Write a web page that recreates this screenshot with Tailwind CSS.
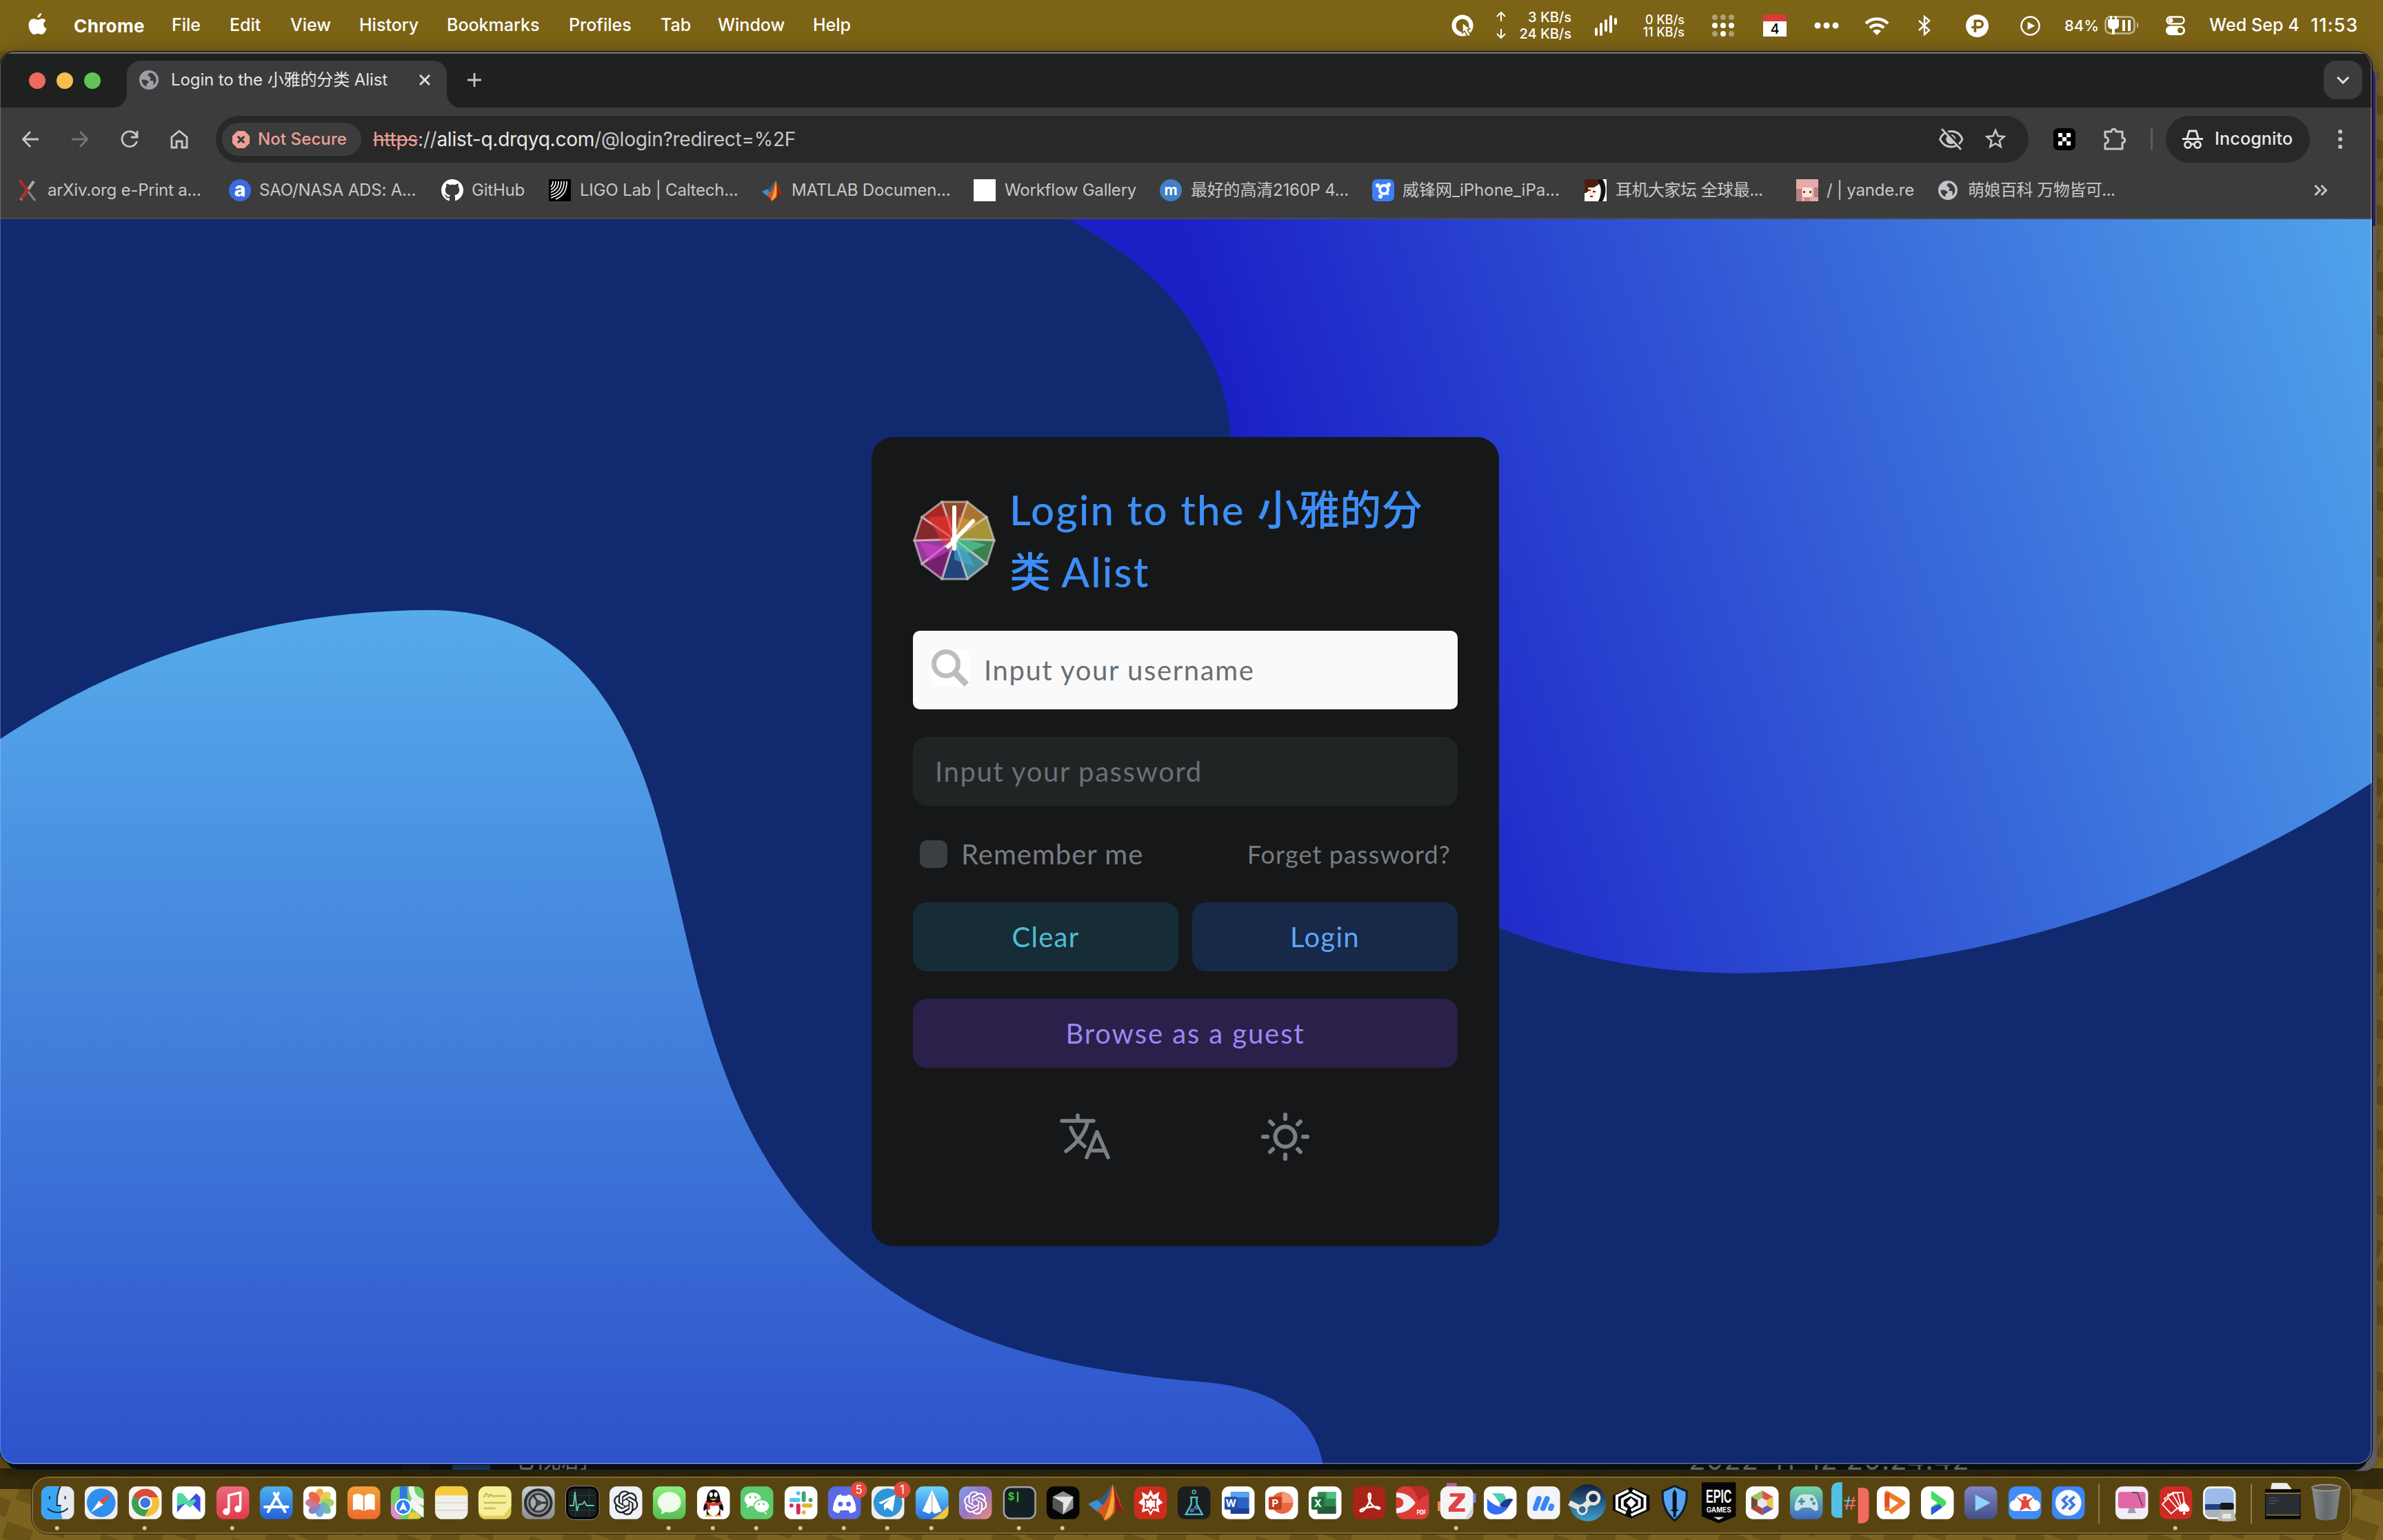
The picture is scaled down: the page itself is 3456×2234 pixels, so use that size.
<!DOCTYPE html>
<html lang="en">
<head>
<meta charset="utf-8">
<title>Login to the 小雅的分类 Alist</title>
<script src="https://cdn.jsdelivr.net/npm/@tailwindcss/browser@4"></script>
</head>
<body class="relative w-[3456px] h-[2234px] overflow-hidden bg-[#7c6419] font-['Inter','Noto_Sans_CJK_SC',sans-serif]">

<!-- shared shapes -->
<svg class="absolute size-0">
  <defs>
    <rect id="t" x="8" y="8" width="48" height="48" rx="11"/>
    <symbol id="globe" viewBox="0 0 28 28"><circle cx="14" cy="14" r="14" fill="currentColor"/><path d="M3.500 14c4-1 7 0 9 1.500s1 3-1 3.500 0 3-1 4.500C6 22 3.500 18 3.500 14zM15 3.500c-2 1.500-3 3-2 4.500s3 1 3.500 3-2 2-1 3.500 4-.5 5 1.500-1 4 0 5.500c2.500-2 4-4.500 4-7.500C24.500 8.500 20.500 4 15 3.500z" fill="#3c3c3c"/></symbol>
    <symbol id="gpt" viewBox="0 0 24 24"><path fill="currentColor" d="M22.2819 9.8211a5.9847 5.9847 0 0 0-.5157-4.9108 6.0462 6.0462 0 0 0-6.5098-2.9A6.0651 6.0651 0 0 0 4.9807 4.1818a5.9847 5.9847 0 0 0-3.9977 2.9 6.0462 6.0462 0 0 0 .7427 7.0966 5.98 5.98 0 0 0 .511 4.9107 6.051 6.051 0 0 0 6.5146 2.9001A5.9847 5.9847 0 0 0 13.2599 24a6.0557 6.0557 0 0 0 5.7718-4.2058 5.9894 5.9894 0 0 0 3.9977-2.9001 6.0557 6.0557 0 0 0-.7475-7.0729zm-9.022 12.6081a4.4755 4.4755 0 0 1-2.8764-1.0408l.1419-.0804 4.7783-2.7582a.7948.7948 0 0 0 .3927-.6813v-6.7369l2.02 1.1686a.071.071 0 0 1 .038.052v5.5826a4.504 4.504 0 0 1-4.4945 4.4944zm-9.6607-4.1254a4.4708 4.4708 0 0 1-.5346-3.0137l.142.0852 4.783 2.7582a.7712.7712 0 0 0 .7806 0l5.8428-3.3685v2.3324a.0804.0804 0 0 1-.0332.0615L9.74 19.9502a4.4992 4.4992 0 0 1-6.1408-1.6464zM2.3408 7.8956a4.485 4.485 0 0 1 2.3655-1.9728V11.6a.7664.7664 0 0 0 .3879.6765l5.8144 3.3543-2.0201 1.1685a.0757.0757 0 0 1-.071 0l-4.8303-2.7865A4.504 4.504 0 0 1 2.3408 7.872zm16.5963 3.8558L13.1038 8.364 15.1192 7.2a.0757.0757 0 0 1 .071 0l4.8303 2.7913a4.4944 4.4944 0 0 1-.6765 8.1042v-5.6772a.79.79 0 0 0-.407-.667zm2.0107-3.0231l-.142-.0852-4.7735-2.7818a.7759.7759 0 0 0-.7854 0L9.409 9.2297V6.8974a.0662.0662 0 0 1 .0284-.0615l4.8303-2.7866a4.4992 4.4992 0 0 1 6.6802 4.66zM8.3065 12.863l-2.02-1.1638a.0804.0804 0 0 1-.038-.0567V6.0742a4.4992 4.4992 0 0 1 7.3757-3.4537l-.142.0805L8.704 5.459a.7948.7948 0 0 0-.3927.6813zm1.0976-2.3654l2.602-1.4998 2.6069 1.4998v2.9994l-2.5974 1.4997-2.6067-1.4997Z"/></symbol>
    <symbol id="matlab" viewBox="0 0 60 60"><path d="M0 32l15-7 9 9-10 10z" fill="#3f8fc9"/><path d="M15 25l8-4C30 14 34 4 40 0c-3 12-8 26-16 34z" fill="#2b5d86"/><path d="M14 44l10-10C32 26 36 10 40 0c6 8 12 34 20 46-8-6-12-6-18 2-5 6-9 10-14 12-3-6-7-14-14-16z" fill="#d2561f"/><path d="M40 0c-1 20-6 40-14 58 6-2 10-6 14-12C44 30 42 12 40 0z" fill="#f5a83c"/><path d="M41 2c4 10 10 34 19 44-7-5-11-5-16 0 1-14 0-30-3-44z" fill="#8f1d12"/></symbol>
    <linearGradient id="gBlue" x1="0" y1="0" x2="0" y2="1"><stop offset="0" stop-color="#4fb3f0"/><stop offset="1" stop-color="#2460dc"/></linearGradient>
    <linearGradient id="gRed" x1="0" y1="0" x2="0" y2="1"><stop offset="0" stop-color="#ee6a7d"/><stop offset="1" stop-color="#e23a4c"/></linearGradient>
    <linearGradient id="gOrange" x1="0" y1="0" x2="0" y2="1"><stop offset="0" stop-color="#f3a03c"/><stop offset="1" stop-color="#ec6a2b"/></linearGradient>
    <linearGradient id="gGreen" x1="0" y1="0" x2="0" y2="1"><stop offset="0" stop-color="#8bee80"/><stop offset="1" stop-color="#58be52"/></linearGradient>
    <linearGradient id="gTeal" x1="0" y1="0" x2="0" y2="1"><stop offset="0" stop-color="#76d8a2"/><stop offset="1" stop-color="#3e67c4"/></linearGradient>
    <linearGradient id="gSky" x1="0" y1="0" x2="0" y2="1"><stop offset="0" stop-color="#6fd6fb"/><stop offset="1" stop-color="#2a6fe0"/></linearGradient>
    <linearGradient id="gMix" x1="0" y1="0" x2="1" y2="1"><stop offset="0" stop-color="#7fa2e8"/><stop offset=".5" stop-color="#9a72c4"/><stop offset="1" stop-color="#ee8f76"/></linearGradient>
    <linearGradient id="gSteam" x1="0" y1="0" x2="0" y2="1"><stop offset="0" stop-color="#10203f"/><stop offset="1" stop-color="#3f9fd0"/></linearGradient>
    <linearGradient id="gPlay" x1="0" y1="0" x2="0" y2="1"><stop offset="0" stop-color="#7d86c8"/><stop offset="1" stop-color="#454f86"/></linearGradient>
    <linearGradient id="gGray" x1="0" y1="0" x2="0" y2="1"><stop offset="0" stop-color="#c8d2d6"/><stop offset="1" stop-color="#8c8c8c"/></linearGradient>
    <linearGradient id="gBin" x1="0" y1="0" x2="1" y2="0"><stop offset="0" stop-color="#8d8f90"/><stop offset=".5" stop-color="#62686d"/><stop offset="1" stop-color="#858789"/></linearGradient>
    <pattern id="tiles" width="90" height="60" patternUnits="userSpaceOnUse" patternTransform="rotate(20)"><rect width="90" height="60" fill="#7c6420"/><rect width="40" height="26" fill="#6a5316"/><rect x="45" y="30" width="40" height="26" fill="#6a5316"/></pattern>
  </defs>
</svg>
<svg class="absolute inset-0" width="3456" height="2234"><rect y="74" width="3456" height="2160" fill="url(#tiles)"/><rect y="2130" width="3456" height="30" fill="#2a2108" opacity=".85"/></svg>

<!-- menu bar -->
<header class="relative flex items-center h-[74px] bg-[#7c6316] text-white text-[25px] font-medium whitespace-nowrap pl-[41px]">
  <svg class="w-[27px] h-[32px] mr-[39px] mb-[4px]" viewBox="0 0 26 32" fill="#fff"><path d="M18.5 0c.3 3-2.300 6.500-5.600 6.700C12.500 3.800 15.500.5 18.500 0zM25 11c-5 3-4 9.500 1 11.500C24.500 27 21.500 31 19 31c-2.200 0-3-1.200-5.500-1.200S10 31 8 31C4 31 0 23.500 0 17.500 0 11.500 3.500 8.200 7.500 8.200c2.500 0 4.200 1.500 6 1.500s3.500-1.700 6.500-1.700c2 0 4 1.200 5 3z"/></svg>
  <span class="w-[142px] font-bold text-[26px] tracking-[0.4px]">Chrome</span>
  <span class="w-[84px]">File</span><span class="w-[88px]">Edit</span><span class="w-[100px]">View</span><span class="w-[127px]">History</span><span class="w-[177px]">Bookmarks</span><span class="w-[133px]">Profiles</span><span class="w-[83px]">Tab</span><span class="w-[138px]">Window</span><span>Help</span>
  <div class="ml-auto flex items-center h-full">
    <svg class="w-[32px] h-[32px]" viewBox="0 0 32 32"><circle cx="16" cy="16" r="12.500" fill="none" stroke="#fff" stroke-width="6"/><path d="M16 12l11 9-4 1 5 8-4 2-5-8-3 3z" fill="#fff" stroke="#7c6316" stroke-width="1.500"/></svg>
    <svg class="w-[16px] h-[42px] ml-[32px]" viewBox="0 0 16 42" fill="none" stroke="#fff" stroke-width="2"><path d="M8 15V2M2 8l6-6 6 6M8 26v13M2 33l6 6 6-6"/></svg>
    <div class="flex flex-col items-end w-[94px] text-[20px] leading-[24px]"><span>3 KB/s</span><span>24 KB/s</span></div>
    <svg class="w-[32px] h-[32px] ml-[34px]" viewBox="0 0 32 32" stroke="#fff" stroke-width="4" stroke-linecap="round"><path d="M2 21v8M9 14v15M16 9v14M23 3v22M30 7v6"/></svg>
    <div class="flex flex-col items-end w-[98px] text-[18px] leading-[18px] pt-[2px]"><span>0 KB/s</span><span>11 KB/s</span></div>
    <svg class="w-[32px] h-[32px] ml-[40px]" viewBox="0 0 32 32" fill="#fff"><g opacity=".4"><circle cx="4" cy="4" r="4"/><circle cx="16" cy="4" r="4"/><circle cx="28" cy="4" r="4"/><circle cx="4" cy="28" r="4"/><circle cx="28" cy="28" r="4"/></g><circle cx="4" cy="16" r="4"/><circle cx="16" cy="16" r="4"/><circle cx="28" cy="16" r="4"/><circle cx="16" cy="28" r="4"/></svg>
    <div class="ml-[42px] w-[34px] h-[32px] bg-white border-t-[10px] border-[#d83c38] text-black text-[20px] leading-[22px] text-center">4</div>
    <svg class="w-[36px] h-[10px] ml-[40px]" viewBox="0 0 36 10" fill="#fff"><circle cx="5" cy="5" r="4.500"/><circle cx="18" cy="5" r="4.500"/><circle cx="31" cy="5" r="4.500"/></svg>
    <svg class="w-[36px] h-[27px] ml-[37px]" viewBox="0 0 36 27" fill="none" stroke="#fff" stroke-width="4.500"><path d="M2 10a23 23 0 0 1 32 0M8 16.500a14 14 0 0 1 20 0"/><path d="M18 27l-6-6a9 9 0 0 1 12 0z" fill="#fff" stroke="none"/></svg>
    <svg class="w-[20px] h-[30px] ml-[41px]" viewBox="0 0 20 30" fill="none" stroke="#fff" stroke-width="2.500"><path d="M2 8l15 14-7 6V2l7 6L2 22"/></svg>
    <svg class="w-[33px] h-[33px] ml-[50px]" viewBox="0 0 32 32"><circle cx="16" cy="16" r="16" fill="#fff"/><path d="M13 25V9h6a4.500 4.500 0 0 1 0 9H8" fill="none" stroke="#7c6316" stroke-width="3.500"/></svg>
    <svg class="w-[29px] h-[29px] ml-[46px]" viewBox="0 0 30 30"><circle cx="15" cy="15" r="13.500" fill="none" stroke="#fff" stroke-width="2.500"/><path d="M11 9l11 6-11 6z" fill="#fff"/></svg>
    <span class="ml-[35px] w-[58px] text-[22px]">84%</span>
    <svg class="w-[50px] h-[28px]" viewBox="0 0 50 28"><rect x="1.500" y="1.500" width="42" height="24" rx="7" fill="none" stroke="#fff" stroke-opacity=".55" stroke-width="2.500"/><path d="M47 9c3 2 3 7 0 9z" fill="#fff" opacity=".55"/><path d="M5 5h16v8c0 4-2 6-6 6v8h-4v-8c-4 0-6-2-6-6zM8 0h3v6H8zM15 0h3v6h-3z" fill="#fff"/><path d="M26 6h4v16h-4zM34 6h4v16h-4z" fill="#fff"/></svg>
    <svg class="w-[28px] h-[28px] ml-[39px]" viewBox="0 0 28 28"><rect x="1.500" y="1.500" width="25" height="10" rx="5" fill="none" stroke="#fff" stroke-width="2.500"/><circle cx="7" cy="6.500" r="3.500" fill="#fff"/><rect y="14.500" width="28" height="13.500" rx="6.700" fill="#fff"/><circle cx="21" cy="21" r="4" fill="#7c6316"/></svg>
    <span class="ml-[35px] w-[147px] tracking-[0.1px]">Wed Sep 4</span><span class="w-[105px] text-[27px] tracking-[1px]">11:53</span>
  </div>
</header>

<!-- windows behind the browser -->
<div class="absolute left-[20px] top-[92px] w-[3427px] h-[2042px] rounded-[20px] bg-[#3c2c74] overflow-hidden border-2 border-[#6e6488]">
  <div class="absolute inset-x-0 bottom-0 top-[234px] bg-[#757575]"></div>
</div>
<div class="absolute left-[8px] top-[2080px] w-[3426px] h-[54px] rounded-b-[22px] bg-[#101315] border-b-2 border-[#2b2f30] overflow-hidden text-[#8a8a8a] text-[40px] leading-[40px] whitespace-nowrap">
  <div class="absolute left-[575px] bottom-0 w-[41px] h-4 bg-[#191b1d]"></div>
  <div class="absolute left-[648px] bottom-0 w-[55px] h-4 bg-[#1f4379]"></div>
  <span class="absolute left-[728px] bottom-[-3px] text-[39px]">电视剧</span>
  <span class="absolute left-[2441px] bottom-[-6px] tracking-[0.8px]">2022-11-12 20:24:42</span>
</div>

<!-- browser window -->
<div class="absolute left-0 top-[75px] w-[3440px] h-[2049px] rounded-[22px] overflow-hidden bg-[#3c3c3c] shadow-[0_0_0_1px_#000,0_8px_30px_rgba(0,0,0,.5)] flex flex-col text-[#c7c7c7] text-[24px] whitespace-nowrap">
  <!-- tab strip -->
  <div class="h-[81px] shrink-0 bg-[#1f2120] border-t-[3px] border-[#696a6a] flex items-start">
    <svg class="w-[104px] h-[24px] ml-[42px] mt-[27px]" viewBox="0 0 104 24"><circle cx="12" cy="12" r="12" fill="#ed6a5e"/><circle cx="52" cy="12" r="12" fill="#f5bf4f"/><circle cx="92" cy="12" r="12" fill="#61c554"/></svg>
    <div class="relative ml-[38px] mt-[10px] w-[464px] h-[68px] rounded-t-[20px] bg-[#3c3c3c] flex items-center text-[#e3e3e3] pl-[18px] pb-[12px]">
      <svg class="absolute bottom-0 left-[-20px] size-5" viewBox="0 0 20 20"><path d="M20 0v20H0A20 20 0 0 0 20 0z" fill="#3c3c3c"/></svg>
      <svg class="absolute bottom-0 right-[-20px] size-5" viewBox="0 0 20 20"><path d="M0 0v20h20A20 20 0 0 1 0 0z" fill="#3c3c3c"/></svg>
      <svg class="size-[28px] text-[#9aa0a6]"><use href="#globe"/></svg>
      <span class="ml-[18px] tracking-[-0.1px]">Login to the 小雅的分类 Alist</span>
      <svg class="absolute left-[424px] top-[20px] size-[16px]" viewBox="0 0 16 16" stroke="#e3e3e3" stroke-width="2.800"><path d="M1 1l14 14M15 1L1 15"/></svg>
    </div>
    <svg class="size-[20px] ml-[30px] mt-[28px]" viewBox="0 0 20 20" stroke="#c7c7c7" stroke-width="2.800"><path d="M10 0v20M0 10h20"/></svg>
    <div class="ml-auto mr-[14px] mt-[10px] size-[56px] rounded-[18px] bg-[#3c3c3c] flex items-center justify-center"><svg class="w-[18px] h-[12px]" viewBox="0 0 18 12" fill="none" stroke="#e3e3e3" stroke-width="3"><path d="M1 2l8 8 8-8"/></svg></div>
  </div>
  <!-- toolbar -->
  <div class="h-[92px] shrink-0 flex items-center pl-2">
    <div class="w-[72px] flex justify-center"><svg class="size-[24px]" viewBox="0 0 24 24" fill="none" stroke="#c7c7c7" stroke-width="2.800"><path d="M24 12H2M12 1L1.500 12 12 23"/></svg></div>
    <div class="w-[72px] flex justify-center"><svg class="size-[24px]" viewBox="0 0 24 24" fill="none" stroke="#757575" stroke-width="2.800"><path d="M0 12h22M12 1l10.500 11L12 23"/></svg></div>
    <div class="w-[72px] flex justify-center"><svg class="size-[26px]" viewBox="0 0 26 26" fill="none" stroke="#c7c7c7" stroke-width="2.800"><path d="M23.500 16A11 11 0 1 1 23 8M24 1v9h-9"/></svg></div>
    <div class="w-[72px] flex justify-center"><svg class="w-[26px] h-[28px]" viewBox="0 0 26 28" fill="none" stroke="#c7c7c7" stroke-width="2.800"><path d="M2 11L13 2l11 9v15h-7v-9H9v9H2z"/></svg></div>
    <div class="ml-[17px] w-[2629px] h-[68px] rounded-full bg-[#282828] flex items-center pl-[9px] text-[28px]">
      <div class="w-[202px] h-[48px] rounded-full bg-[#3c3c3c] flex items-center pl-[15px] text-[#ee9f97] text-[24px] font-medium">
        <svg class="size-[25px] mr-[12px]" viewBox="0 0 24 24"><path d="M7 0h10l7 7v10l-7 7H7l-7-7V7z" fill="#ee9f97"/><path d="M7.500 7.500l9 9M16.500 7.500l-9 9" stroke="#3c3c3c" stroke-width="3"/></svg><span class="tracking-[0.1px]">Not Secure</span></div>
      <span class="ml-[17px] tracking-[-0.25px]"><span class="text-[#ee9f97] line-through">https</span><span class="text-[#c7c7c7]">://</span><span class="text-[#e8e8e8]">alist-q.drqyq.com</span>/@login?redirect=%2F</span>
      <div class="ml-auto mr-4 flex">
        <div class="w-16 flex justify-center"><svg class="w-[36px] h-[32px]" viewBox="0 0 36 32" fill="none" stroke="#c7c7c7" stroke-width="2.800"><path d="M9 7C5 9 3 12 1.500 16 5 23 11 27 18 27c3 0 5-.5 7-1.500M13 5c2-.5 3-.5 5-.5 7 0 13 4 16 11.500-1 3-3 5-5 7M4 1l28 30"/><path d="M13 11a6.500 6.500 0 0 0 9 10zM18 9.500a6.500 6.500 0 0 1 6 6z" fill="#c7c7c7" stroke-width="1"/></svg></div>
        <div class="w-16 flex justify-center"><svg class="size-[30px]" viewBox="0 0 30 30" fill="none" stroke="#c7c7c7" stroke-width="2.600"><path d="M15 3l3.500 8.300 9 .8-6.800 6 2 8.800L15 22.200l-7.700 4.700 2-8.800-6.800-6 9-.8z"/></svg></div>
      </div>
    </div>
    <div class="ml-4 w-[72px] flex justify-center"><svg class="size-[32px]" viewBox="0 0 32 32"><rect width="32" height="32" rx="7" fill="#000"/><path d="M7 7h6v6H7zM19 7h6v6h-6zM13 13h6v6h-6zM7 19h6v6H7zM19 19h6v6h-6z" fill="#fff"/></svg></div>
    <div class="w-[74px] flex justify-center"><svg class="w-[34px] h-[34px]" viewBox="0 0 34 34" fill="none" stroke="#c7c7c7" stroke-width="3"><path d="M3 6h9c0-5 7-5 7 0h9v9c5 0 5 7 0 7v9H3v-8c6 0 6-9 0-9z" stroke-linejoin="round"/></svg></div>
    <div class="ml-[15px] w-[3px] h-[32px] bg-[#5c5c5c]"></div>
    <div class="ml-[19px] w-[209px] h-[68px] rounded-full bg-[#282828] flex items-center pl-[24px] text-[#e8e8e8] text-[25px] font-medium">
      <svg class="w-[30px] h-[28px] mr-[17px]" viewBox="0 0 30 28" fill="none" stroke="#e3e3e3" stroke-width="2.800"><path d="M7 12L10 2h10l3 10M0 13.500h30"/><circle cx="8" cy="22" r="4.500"/><circle cx="22" cy="22" r="4.500"/><path d="M12 21h6"/></svg><span class="tracking-[0.2px]">Incognito</span></div>
    <div class="w-[88px] flex justify-center"><svg class="w-[6px] h-[28px]" viewBox="0 0 6 28" fill="#c7c7c7"><circle cx="3" cy="3" r="3"/><circle cx="3" cy="14" r="3"/><circle cx="3" cy="25" r="3"/></svg></div>
  </div>
  <!-- bookmarks -->
  <div class="h-[70px] shrink-0 border-b-2 border-[#4a4a4a] flex items-center pl-[24px] pb-[12px] tracking-[-0.2px]">
    <div class="w-[308px] flex items-center gap-[13px]"><svg class="size-[32px]" viewBox="0 0 32 32"><path d="M25 3L6 30" stroke="#b0aba4" stroke-width="4"/><path d="M4 1l23 30" stroke="#8a8580" stroke-width="3"/><path d="M4 1l12 15L7 29" fill="none" stroke="#b02a26" stroke-width="4"/></svg><span>arXiv.org e-Print a...</span></div>
    <div class="w-[308px] flex items-center gap-[12px]"><svg class="size-[32px]" viewBox="0 0 32 32"><circle cx="16" cy="16" r="16" fill="#3a6be0"/><text x="16" y="25" text-anchor="middle" font-size="28" font-weight="800" fill="#fff">a</text></svg><span>SAO/NASA ADS: A...</span></div>
    <div class="w-[156px] flex items-center gap-[12px]"><svg class="size-[32px]" viewBox="0 0 16 16"><path fill="#fff" d="M8 0C3.580 0 0 3.580 0 8c0 3.540 2.290 6.530 5.470 7.590.4.070.55-.17.55-.38 0-.19-.010-.82-.010-1.490-2.010.37-2.530-.49-2.690-.94-.090-.23-.48-.94-.82-1.130-.28-.15-.68-.52-.010-.53.63-.010 1.080.58 1.230.82.72 1.210 1.870.87 2.330.66.070-.52.28-.87.51-1.070-1.780-.2-3.640-.89-3.640-3.950 0-.87.31-1.590.82-2.150-.080-.2-.36-1.020.080-2.120 0 0 .67-.21 2.200.82.64-.18 1.320-.27 2-.27s1.360.090 2 .27c1.530-1.040 2.200-.82 2.200-.82.44 1.100.16 1.920.080 2.120.51.56.82 1.270.82 2.150 0 3.070-1.870 3.750-3.650 3.950.29.25.54.73.54 1.480 0 1.070-.010 1.930-.010 2.200 0 .21.15.46.55.38A8 8 0 0 0 16 8c0-4.420-3.580-8-8-8z"/></svg><span>GitHub</span></div>
    <div class="w-[308px] flex items-center gap-[13px]"><svg class="size-[32px]" viewBox="0 0 32 32"><rect width="32" height="32" fill="#000"/><g fill="none" stroke="#fff" stroke-width="1.600"><path d="M6 3c0 4-1 6-3 8M10 3c0 7-3 10-7 12M14 3c0 9-4 13-11 16M18 3c0 12-5 17-15 20M22 3c0 14-6 20-19 24M26 3c0 14-5 21-16 26"/></g></svg><span>LIGO Lab | Caltech...</span></div>
    <div class="w-[308px] flex items-center gap-[12px]"><svg class="size-[32px]"><use href="#matlab" x="1" y="2" width="30" height="30"/></svg><span>MATLAB Documen...</span></div>
    <div class="w-[270px] flex items-center gap-[13px]"><div class="size-[32px] bg-white"></div><span>Workflow Gallery</span></div>
    <div class="w-[308px] flex items-center gap-[13px]"><svg class="size-[32px]" viewBox="0 0 32 32"><circle cx="16" cy="16" r="16" fill="#4080c8"/><text x="16" y="23" text-anchor="middle" font-size="21" font-weight="700" fill="#fff">m</text></svg><span>最好的高清2160P 4...</span></div>
    <div class="w-[308px] flex items-center gap-[12px]"><svg class="size-[32px]" viewBox="0 0 32 32"><rect width="32" height="32" rx="7" fill="#3c80f5"/><circle cx="17" cy="15" r="6" fill="none" stroke="#fff" stroke-width="4"/><circle cx="8" cy="9" r="3" fill="#fff"/><circle cx="24" cy="8" r="3" fill="#fff"/><circle cx="12" cy="25" r="3" fill="#fff"/><path d="M20 20l4 2" stroke="#fff" stroke-width="3"/></svg><span class="tracking-normal">威锋网_iPhone_iPa...</span></div>
    <div class="w-[307px] flex items-center gap-[13px]"><svg class="size-[32px]" viewBox="0 0 32 32"><rect width="32" height="32" fill="#fff"/><path d="M0 0h20v8L10 14 2 20H0z" fill="#4b1f0c"/><path d="M20 0h6c6 8 6 22 0 32h-6c5-10 5-22 0-26z" fill="#111"/><path d="M5 12h11v10l-4 6-5-4z" fill="#fbe9df"/><path d="M5 15h4v2H5zM12 17h4v2h-4zM8 24h4v2H8z" fill="#6b2a18"/></svg><span class="tracking-[-0.5px]">耳机大家坛 全球最...</span></div>
    <div class="w-[204px] flex items-center gap-[12px]"><svg class="size-[32px]" viewBox="0 0 32 32"><rect width="32" height="32" fill="#e5aaa9"/><path d="M9 12h14v12l-7 6-7-6z" fill="#fbe6dc"/><path d="M0 14h8v18H0zM26 12h6v14h-6z" fill="#b9807f"/><path d="M10 17h3v3h-3zM19 17h3v3h-3z" fill="#7a3a44"/><path d="M12 26h8v6h-8z" fill="#c98a82"/></svg><span>/ | yande.re</span></div>
    <div class="flex items-center gap-[15px]"><svg class="ml-[2px] size-[28px] text-[#c0c4c9]"><use href="#globe"/></svg><span class="tracking-[-0.5px]">萌娘百科 万物皆可...</span></div>
    <svg class="ml-auto mr-[64px] w-[20px] h-[16px]" viewBox="0 0 20 16" fill="none" stroke="#c7c7c7" stroke-width="3"><path d="M1.500 1l7 7-7 7M10.500 1l7 7-7 7"/></svg>
  </div>
  <!-- page -->
  <main class="relative grow bg-[#11296f] flex justify-center">
    <svg class="absolute inset-0 size-full" viewBox="0 144.280 1560.740 819.400" preserveAspectRatio="none">
      <defs>
        <linearGradient id="blobR" gradientUnits="userSpaceOnUse" x1="820" y1="300" x2="1540" y2="72"><stop offset="0" stop-color="#1b20c6"/><stop offset="1" stop-color="#50a4ea"/></linearGradient>
        <linearGradient id="blobL" gradientUnits="userSpaceOnUse" x1="0" y1="401" x2="0" y2="1000"><stop offset="0" stop-color="#56abeb"/><stop offset="1" stop-color="#2b4dc9"/></linearGradient>
      </defs>
      <path d="M702 144C768 178 806 228 810 288C814 380 835 540 986 610.500C1040 632 1090 640.500 1147 640.500C1300 638.500 1440 594 1561 515V144z" fill="url(#blobR)"/>
      <path d="M0 486.500C85 430 180 401.500 285 401.500C375 403 415 465 438 560C462 655 472 740 545 815.500C610 880 690 901 790 909.500C838 913 865 932 870.500 964H0z" fill="url(#blobL)"/>
    </svg>
    <!-- login card -->
    <section class="relative mt-[316px] mr-[2px] w-[910px] h-[1174px] rounded-[32px] bg-[#161718] p-[60px] pb-0 font-['Lato','Noto_Sans_CJK_SC',sans-serif] text-[#787c80] text-[40px] whitespace-normal">
      <div class="flex items-center h-[180px]">
        <svg class="w-[120px] h-[116px] shrink-0" viewBox="0 0 120 116">
          <g stroke="#d8d0d0" stroke-opacity=".65" stroke-width="3">
            <path d="M60 56L42 2H79z" fill="#93472a"/><path d="M60 56L79 2l28 22z" fill="#a9742f"/><path d="M60 56l47-32 11 34z" fill="#a49536"/><path d="M60 56l58 2-11 34z" fill="#3d8050"/><path d="M60 56l47 36-28 22z" fill="#42899a"/><path d="M60 56l19 58H42z" fill="#24457b"/><path d="M60 56L42 114 13 92z" fill="#75206f"/><path d="M60 56L13 92 2 58z" fill="#97399b"/><path d="M60 56L2 58l11-34z" fill="#85272c"/><path d="M60 56L13 24 42 2z" fill="#a52823"/>
          </g>
          <path d="M22 24l38-2 4 30-8 18-14-10z" fill="#ee3535" opacity=".6"/><path d="M66 24l30 8-22 16-10 4z" fill="#e09a3c" opacity=".6"/><path d="M66 54l40 10-26 12-18-8z" fill="#55d7a0" opacity=".6"/><path d="M10 60l48 10-34 18z" fill="#d03fd0" opacity=".6"/><path d="M60 66l16 4 14 26-30-10z" fill="#3fb0d5" opacity=".6"/>
          <path d="M60 10v60M87 30L51 67" stroke="#fff" stroke-width="6" stroke-linecap="round"/><circle cx="60" cy="57" r="5" fill="#fff"/>
        </svg>
        <h1 class="ml-[20px] w-[630px] text-[60px] leading-[90px] font-medium text-[#3d8ff8]"><span class="tracking-[2.2px]">Login to the </span>小雅的分<br>类 <span class="tracking-[2.200px]">Alist</span></h1>
      </div>
      <div class="mt-[41px] h-[114px] rounded-[10px] bg-[#fafafa] flex items-center pl-[27px] text-[#687076]">
        <svg class="size-[54px] mb-[7px]" viewBox="0 0 54 54"><rect width="54" height="54" fill="#fff"/><circle cx="21" cy="21" r="17.500" fill="none" stroke="#bdbdbd" stroke-width="7"/><path d="M34 34l17 17" stroke="#bdbdbd" stroke-width="9"/></svg>
        <span class="ml-[22px] tracking-[1.6px]">Input your username</span>
      </div>
      <div class="mt-[40px] h-[100px] rounded-[20px] bg-[#202425] flex items-center pl-[32px] text-[#697177]"><span class="tracking-[1.6px]">Input your password</span></div>
      <div class="mt-[50px] h-[40px] flex items-center px-[10px]">
        <div class="size-[40px] rounded-[10px] bg-[#3c3f42]"></div><span class="ml-[20px] tracking-[1px]">Remember me</span><span class="ml-auto text-[36px] tracking-[1.1px]">Forget password?</span>
      </div>
      <div class="mt-[50px] flex gap-[20px] tracking-[1.300px]">
        <div class="flex-1 h-[100px] rounded-[20px] bg-[#162d38] text-[#50bfd2] flex items-center justify-center">Clear</div>
        <div class="flex-1 h-[100px] rounded-[20px] bg-[#172849] text-[#5fa5f8] flex items-center justify-center">Login</div>
      </div>
      <div class="mt-[40px] h-[100px] rounded-[20px] bg-[#2a204a] text-[#9b87f5] tracking-[1.900px] flex items-center justify-center">Browse as a guest</div>
      <div class="mt-[64px] flex pl-[211px]">
        <svg class="w-[76px] h-[72px]" viewBox="-3 -3 76 72" fill="none" stroke="#7b7f84" stroke-width="5.500" stroke-linecap="round" stroke-linejoin="round"><path d="M2 10h46M25 2v8M39 12C36 28 22 44 8 54M15 20c4 10 11 20 20 27M38 63L53 26l16 37M43 53h20"/></svg>
        <svg class="ml-[217px] size-[72px]" viewBox="-36 -36 72 72" fill="none" stroke="#7b7f84" stroke-width="6" stroke-linecap="round"><circle r="14.500"/><path d="M0-32v6M0 26v6M-32 0h6M26 0h6M-22-22l4 4M22-22l-4 4M-22 22l4-4M22 22l-4-4"/></svg>
      </div>
    </section>
  </main>
</div>
<div class="absolute left-0 top-[75px] w-[3440px] h-[2049px] rounded-[22px] border-r-2 border-b-2 border-l border-white/25"></div>

<!-- dock -->
<nav class="absolute left-[46px] top-[2142px] w-[3364px] h-[83px] rounded-[24px] bg-[#574411] border-2 border-[#7d6a3a] outline outline-[#2c2208] flex pl-[4px] pt-[4px] [&>svg]:w-[63.400px] [&>svg]:h-[74px] [&>svg]:shrink-0 [&>svg]:overflow-visible">
<svg viewBox="0 0 64 74"><use href="#t" fill="#e6eaf0"/><path d="M19 8h17c-4 10-5 18-5 28h6c0 8 0 14 2 20H19A11 11 0 0 1 8 45V19A11 11 0 0 1 19 8z" fill="#3aa5f5"/><path d="M17 40c8 8 22 8 30 0M20 22v5M43 22v5M36 8c-5 10-5 18-5 28h6" fill="none" stroke="#1b2c40" stroke-width="2"/><circle cx="31" cy="69" r="3" fill="#d8c48c"/></svg>
<svg viewBox="0 0 64 74"><use href="#t" fill="#eee"/><circle cx="32" cy="32" r="21" fill="#2f8ff0"/><path d="M47 18L35 35l-6-6z" fill="#e8483c"/><path d="M17 46l12-17 6 6z" fill="#fff"/></svg>
<svg viewBox="0 0 64 74"><use href="#t" fill="#f6f4f0"/><circle cx="32" cy="32" r="20" fill="#3fa052"/><path d="M32 32L14.500 22A20 20 0 0 1 51 25z" fill="#d94a3a"/><path d="M32 32V24h19A20 20 0 0 1 31 52l9-16z" fill="#f3c03c"/><circle cx="32" cy="32" r="10" fill="#fff"/><circle cx="32" cy="32" r="7.500" fill="#3a78e0"/><circle cx="31" cy="69" r="3" fill="#d8c48c"/></svg>
<svg viewBox="0 0 64 74"><use href="#t" fill="#fff"/><path d="M15 46V30l9-4 8 4 11-12 6 6v22l-8-8-9-9-9 8z" fill="#4049e8"/><path d="M15 18l8 0 10 12 7-4 3 3-9 10-8-6-11 4z" fill="#4fd8a0"/></svg>
<svg viewBox="0 0 64 74"><use href="#t" fill="url(#gRed)"/><path d="M26 45V21l17-4v24" fill="none" stroke="#fff" stroke-width="3.500"/><circle cx="22.500" cy="45" r="5" fill="#fff"/><circle cx="39.500" cy="41" r="5" fill="#fff"/><circle cx="31" cy="69" r="3" fill="#d8c48c"/></svg>
<svg viewBox="0 0 64 74"><use href="#t" fill="url(#gBlue)"/><path d="M29 18l16 27M35 18L20 45M15 38h34" stroke="#fff" stroke-width="4" stroke-linecap="round"/></svg>
<svg viewBox="0 0 64 74"><use href="#t" fill="#fff"/><g opacity=".88"><ellipse cx="32" cy="21" rx="6.500" ry="10" fill="#f39a33"/><ellipse cx="32" cy="21" rx="6.500" ry="10" fill="#e6c83a" transform="rotate(45 32 32)"/><ellipse cx="32" cy="21" rx="6.500" ry="10" fill="#9bcb58" transform="rotate(90 32 32)"/><ellipse cx="32" cy="21" rx="6.500" ry="10" fill="#57b59a" transform="rotate(135 32 32)"/><ellipse cx="32" cy="21" rx="6.500" ry="10" fill="#5e9bd8" transform="rotate(180 32 32)"/><ellipse cx="32" cy="21" rx="6.500" ry="10" fill="#7a72c0" transform="rotate(225 32 32)"/><ellipse cx="32" cy="21" rx="6.500" ry="10" fill="#c4668f" transform="rotate(270 32 32)"/><ellipse cx="32" cy="21" rx="6.500" ry="10" fill="#e8523c" transform="rotate(315 32 32)"/></g></svg>
<svg viewBox="0 0 64 74"><use href="#t" fill="url(#gOrange)"/><path d="M31 44V22c-4-4-11-4-15-1v22c5-2 11-2 15 1zM33 44V22c4-4 11-4 15-1v22c-5-2-11-2-15 1z" fill="#fff"/></svg>
<svg viewBox="0 0 64 74"><use href="#t" fill="#6fd06a"/><path d="M21 8h11v26H21z" fill="#2d78e6"/><path d="M34 8h8c0 12 6 16 14 18v10C42 34 34 24 34 8z" fill="#f1f1f1"/><path d="M34 36l22 18v-14L38 26z" fill="#f6f6f6"/><path d="M8 30l16 26h-5A11 11 0 0 1 8 45z" fill="#d88fc8"/><path d="M34 46h12l6 8-18 2z" fill="#f5c93c"/><circle cx="26" cy="38" r="11" fill="#2f7ef0" stroke="#fff" stroke-width="2"/><path d="M26 30l6 14-6-3-6 3z" fill="#fff"/></svg>
<svg viewBox="0 0 64 74"><use href="#t" fill="#f1efea"/><path d="M8 21v-2A11 11 0 0 1 19 8h26a11 11 0 0 1 11 11v2z" fill="#f7cb3e"/><path d="M8 32h48M8 43h48" stroke="#d8d5cd" stroke-width="1.500"/></svg>
<svg viewBox="0 0 64 74"><use href="#t" fill="#e2cf60"/><path d="M19 8h26a11 11 0 0 1 11 11v18L44 51H19A11 11 0 0 1 8 40V19A11 11 0 0 1 19 8z" fill="#f7ee9a"/><path d="M16 24c6-14 6 4 8-2s4 2 6 0l18 0M16 32h32M16 40h17" fill="none" stroke="#cdbb58" stroke-width="2.500"/></svg>
<svg viewBox="0 0 64 74"><use href="#t" fill="url(#gGray)"/><circle cx="32" cy="32" r="19" fill="#8e9294" stroke="#2c2e30" stroke-width="4"/><circle cx="32" cy="32" r="13" fill="#a8acae" stroke="#3a3c3e" stroke-width="3"/><path d="M32 32h14M32 32l-8-12M32 32l-8 12" stroke="#333" stroke-width="3"/><circle cx="32" cy="32" r="4" fill="#444"/></svg>
<svg viewBox="0 0 64 74"><rect x="9" y="9" width="46" height="46" rx="11" fill="#17211f" stroke="#000" stroke-width="4"/><rect x="7.500" y="7.500" width="49" height="49" rx="12" fill="none" stroke="#9a9a9a"/><path d="M14 21h36M14 43h36M22 12v40M42 12v40" stroke="#2d4541"/><path d="M13 36h6l2-20 3 28 3-10h5l3-4 3 6h11" fill="none" stroke="#6fc9b5" stroke-width="1.800"/></svg>
<svg viewBox="0 0 64 74"><use href="#t" fill="#eef2f8"/><g color="#222"><use href="#gpt" x="14" y="14" width="36" height="36"/></g></svg>
<svg viewBox="0 0 64 74"><use href="#t" fill="url(#gGreen)"/><ellipse cx="32" cy="31" rx="17" ry="15" fill="#effbec"/><path d="M22 40l-2 9 9-5z" fill="#effbec"/><circle cx="31" cy="69" r="3" fill="#d8c48c"/></svg>
<svg viewBox="0 0 64 74"><use href="#t" fill="#fff"/><path d="M18 44c-2-6 2-12 4-15 0-22 20-22 20 0 2 3 6 9 4 15l-4-3v9H22v-9z" fill="#111"/><ellipse cx="32" cy="41" rx="9" ry="10" fill="#fff"/><ellipse cx="28.500" cy="20" rx="2.500" ry="3.500" fill="#fff"/><ellipse cx="35.500" cy="20" rx="2.500" ry="3.500" fill="#fff"/><path d="M26 26h12l-6 3z" fill="#f3a32b"/><path d="M20 30c8 3 16 3 24 0v4c-5 2-10 3-17 2v6h-4v-7l-3-2z" fill="#e0342c"/><path d="M20 52c0-4 11-3 11 0zM33 52c0-4 11-3 11 0z" fill="#f3a32b"/><circle cx="31" cy="69" r="3" fill="#d8c48c"/></svg>
<svg viewBox="0 0 64 74"><use href="#t" fill="#5bcb6f"/><ellipse cx="26" cy="27" rx="12" ry="10" fill="#fff"/><path d="M18 34l-1 6 6-4zM44 44l3 5-7-3z" fill="#fff"/><ellipse cx="39" cy="37" rx="11.500" ry="9.500" fill="#fff" stroke="#5bcb6f" stroke-width="1.500"/><g fill="#5bcb6f"><circle cx="22" cy="24" r="1.700"/><circle cx="30" cy="24" r="1.700"/><circle cx="35" cy="34" r="1.500"/><circle cx="42" cy="34" r="1.500"/></g><circle cx="31" cy="69" r="3" fill="#d8c48c"/></svg>
<svg viewBox="0 0 64 74"><use href="#t" fill="#fff"/><g stroke-width="6" stroke-linecap="round"><path d="M18 28h10M28 18v0" stroke="#5bc5ea"/><path d="M36 18v10M46 28v0" stroke="#3ea776"/><path d="M36 36h10M36 46v0" stroke="#e5b33c"/><path d="M28 36v10M18 36v0" stroke="#cf2c58"/></g><circle cx="31" cy="69" r="3" fill="#d8c48c"/></svg>
<svg viewBox="0 0 64 74"><use href="#t" fill="#5b68e8"/><path d="M22 21l5-1.500 1 2h8l1-2 5 1.500c4 5 7 14 7 22-3 3-6 4-9 4l-2-4H26l-2 4c-3 0-6-1-9-4 0-8 3-17 7-22z" fill="#fff"/><circle cx="26" cy="34" r="3.500" fill="#5b68e8"/><circle cx="38" cy="34" r="3.500" fill="#5b68e8"/><circle cx="53" cy="13" r="12" fill="#e34a3c"/><text x="53" y="19" text-anchor="middle" font-size="17" fill="#fff">5</text><circle cx="31" cy="69" r="3" fill="#d8c48c"/></svg>
<svg viewBox="0 0 64 74"><use href="#t" fill="#eee"/><circle cx="32" cy="32" r="21" fill="#2f95d8"/><path d="M18 32l25-12-4 25-8-6-4 4-1-8 10-9-13 8z" fill="#fff"/><circle cx="53" cy="13" r="12" fill="#e34a3c"/><text x="53" y="19" text-anchor="middle" font-size="17" fill="#fff">1</text><circle cx="31" cy="69" r="3" fill="#d8c48c"/></svg>
<svg viewBox="0 0 64 74"><use href="#t" fill="url(#gSky)"/><path d="M30 56c8-3 18-10 26-20v9a11 11 0 0 1-11 11z" fill="#f3c63a"/><path d="M32 13l14 31-10 4-4-4-4 4-10-4z" fill="#fff"/><path d="M32 20v24" stroke="#b8c8d8" stroke-width="2"/><circle cx="31" cy="69" r="3" fill="#d8c48c"/></svg>
<svg viewBox="0 0 64 74"><use href="#t" fill="url(#gMix)"/><g color="#fff"><use href="#gpt" x="15" y="15" width="34" height="34"/></g></svg>
<svg viewBox="0 0 64 74"><rect x="9" y="9" width="46" height="46" rx="10" fill="#152024" stroke="#a0a4a5" stroke-width="2.500"/><text x="15" y="28" font-size="16" font-family="Liberation Mono" font-weight="700" fill="#43d13a">$|</text><circle cx="31" cy="69" r="3" fill="#d8c48c"/></svg>
<svg viewBox="0 0 64 74"><use href="#t" fill="#050505"/><path d="M32 15l15 8v17l-15 9-15-9V23z" fill="#8c8c8c"/><path d="M17 23h30L32 49z" fill="#e6e6e6"/><path d="M17 23l15 9v17l-15-9z" fill="#555"/><circle cx="31" cy="69" r="3" fill="#d8c48c"/></svg>
<svg viewBox="0 0 64 74"><use href="#matlab" x="2" y="5" width="60" height="54"/></svg>
<svg viewBox="0 0 64 74"><use href="#t" fill="#cf2c1c"/><path d="M32 13l4 8 9-5-2 9 7 7-7 4 2 10-9-3-4 8-4-8-9 3 2-10-7-4 7-7-2-9 9 5z" fill="#fff"/><path d="M32 23l3 5 5-1-1 6 1 7-5-1-3 5-3-5-5 1 1-7-1-6 5 1z" fill="none" stroke="#cf2c1c" stroke-width="2"/></svg>
<svg viewBox="0 0 64 74"><use href="#t" fill="#1c1d20"/><path d="M26 24h12M28 24v10l-8 15h24l-8-15V24" fill="none" stroke="#4cc3c8" stroke-width="2.500"/><circle cx="32" cy="16" r="2.500" fill="none" stroke="#4cc3a0" stroke-width="1.500"/><circle cx="29" cy="43" r="2" fill="none" stroke="#4c9fe8" stroke-width="1.500"/><circle cx="35" cy="39" r="2" fill="none" stroke="#4c9fe8" stroke-width="1.500"/></svg>
<svg viewBox="0 0 64 74"><use href="#t" fill="#fff"/><rect x="21" y="16" width="27" height="32" rx="2" fill="#2b63c4"/><path d="M21 16h27v8H21z" fill="#58a5ee"/><path d="M21 40h27v8H21z" fill="#1c3f94"/><rect x="12" y="23" width="19" height="19" rx="2" fill="#2451b0"/><text x="21.500" y="38" text-anchor="middle" font-size="15" font-weight="700" fill="#fff">W</text></svg>
<svg viewBox="0 0 64 74"><use href="#t" fill="#fff"/><circle cx="33" cy="32" r="16" fill="#e8683f"/><path d="M33 16a16 16 0 0 1 16 16H33z" fill="#f49b7a"/><rect x="13" y="23" width="19" height="19" rx="2" fill="#c13f20"/><text x="22.500" y="38" text-anchor="middle" font-size="15" font-weight="700" fill="#fff">P</text></svg>
<svg viewBox="0 0 64 74"><use href="#t" fill="#fff"/><rect x="21" y="16" width="27" height="32" rx="2" fill="#2f8a52"/><path d="M34 16h14v10H34z" fill="#54c184"/><path d="M21 37h27v11H21z" fill="#275a3a"/><rect x="12" y="23" width="19" height="19" rx="2" fill="#1f6e3e"/><text x="21.500" y="38" text-anchor="middle" font-size="15" font-weight="700" fill="#fff">X</text></svg>
<svg viewBox="0 0 64 74"><use href="#t" fill="#a82418"/><path d="M19 44c-3-4 22-8 28-5 4 5-14 0-16-15-1-8 4-8 3 0-1 9-11 24-15 20z" fill="none" stroke="#fff" stroke-width="2.600"/></svg>
<svg viewBox="0 0 64 74"><use href="#t" fill="#dd3b38"/><path d="M40 30c6-8 10-8 16-10v-1A11 11 0 0 0 45 8H25c10 4 14 12 15 22z" fill="#b92a28"/><path d="M8 17c14 0 22 6 28 15-6 9-14 15-28 15z" fill="#f3f1f1"/><path d="M8 24c14 0 14 16 0 16z" fill="#dd3b38"/><text x="45" y="49" text-anchor="middle" font-size="9" font-weight="700" textLength="14" lengthAdjust="spacingAndGlyphs" fill="#fff">PDF</text></svg>
<svg viewBox="0 0 64 74"><path d="M17 3h15v8H17z" fill="#b4609a"/><path d="M50 18h10v14H50z" fill="#7d84dc"/><path d="M4 30h8v14H4z" fill="#e88a4c"/><use href="#t" fill="#f4f4f4"/><path d="M22 18h22v6L30 40h14v5H20v-6l14-16H22z" fill="#e04348"/><path d="M56 36L44 56h1a11 11 0 0 0 11-11z" fill="#d5d5d5"/><circle cx="31" cy="69" r="3" fill="#d8c48c"/></svg>
<svg viewBox="0 0 64 74"><use href="#t" fill="#fff"/><path d="M20 18h16c4 4 5 8 5 13l-8 6c-3-8-7-13-13-19z" fill="#4fd0b4"/><path d="M51 27c-8-3-15 1-20 9l10 6z" fill="#1c3c90"/><path d="M13 26c8 9 18 14 30 12-6 14-24 14-30 4z" fill="#346cf2"/></svg>
<svg viewBox="0 0 64 74"><use href="#t" fill="#f3f4f8"/><path d="M20 40l5-14M31 40l6-14M42.500 40l1-3" stroke="#3d86f6" stroke-width="8" stroke-linecap="round"/></svg>
<svg viewBox="0 0 64 74"><circle cx="32" cy="32" r="27" fill="url(#gSteam)"/><path d="M5 32l18 9" stroke="#e8e4dc" stroke-width="8"/><path d="M24 40l15-13" stroke="#e8e4dc" stroke-width="9"/><circle cx="40" cy="25" r="8.500" fill="#17365c" stroke="#e8e4dc" stroke-width="4.500"/><circle cx="24" cy="42" r="6.500" fill="#2a6a98" stroke="#e8e4dc" stroke-width="3"/></svg>
<svg viewBox="0 0 64 74"><path d="M32 9l27 12v22L32 55 5 43V21z" fill="#0a0a0a"/><g fill="none" stroke="#fff" stroke-width="4"><path d="M34 14l18 9v18L32 50M28 14l-17 8v19l13 6M26 42l-7-4V27l12-7 13 7v10l-12 6"/></g><path d="M32 25l7 7-7 7-7-7z" fill="#fff"/></svg>
<svg viewBox="0 0 64 74"><path d="M32 6l19 8c1 20-4 34-19 46C17 48 12 34 13 14z" fill="#0d1b2a"/><path d="M32 9l16 7c1 17-4 29-16 40C20 45 15 33 16 16z" fill="#56a5ee"/><path d="M32 12l3 6v24h4l-5 3v8h-4v-8l-5-3h4V18z" fill="#0a0f18"/></svg>
<svg viewBox="0 0 64 74"><path d="M7 4q0-2 2-2h46q2 0 2 2v48L32 62 7 52z" fill="#050505"/><text x="32" y="32" text-anchor="middle" font-size="27" font-weight="700" font-family="Liberation Sans" textLength="38" lengthAdjust="spacingAndGlyphs" fill="#f2f2f2">EPIC</text><text x="32" y="46" text-anchor="middle" font-size="10" font-weight="700" textLength="36" lengthAdjust="spacingAndGlyphs" fill="#f2f2f2">GAMES</text><path d="M24 53h16l-8 4z" fill="#ddd"/></svg>
<svg viewBox="0 0 64 74"><use href="#t" fill="#fbfafa"/><path d="M32 14v18L16 23z" fill="#9dc75a"/><path d="M32 14v18l16-9z" fill="#d8574c"/><path d="M48 23v18l-16-9z" fill="#eac44c"/><path d="M48 41l-16 9V32z" fill="#6a5cab"/><path d="M32 50V32l-16 9z" fill="#b0453c"/><path d="M16 41V23l16 9z" fill="#6a4a38"/><path d="M32 25l7 4v7l-7 4-7-4v-7z" fill="#e8e8ea"/></svg>
<svg viewBox="0 0 64 74"><use href="#t" fill="url(#gTeal)"/><path d="M22 21c4-2 16-2 20 0 5 4 8 14 7 21-4 5-8-2-11-3H26c-3 1-7 8-11 3-1-7 2-17 7-21z" fill="#d8f2ee" opacity=".85"/><path d="M25 25v10M20 30h10" stroke="#3f8f9c" stroke-width="3"/><circle cx="40" cy="27" r="2.500" fill="#3f8f9c"/><circle cx="43" cy="33" r="2.500" fill="#3f8f9c"/></svg>
<svg viewBox="0 0 64 74"><path d="M21 2v52h-8a8 8 0 0 1-8-8V12A10 10 0 0 1 15 2z" fill="#52c0e4"/><path d="M44 10h8a8 8 0 0 1 8 8v34a10 10 0 0 1-10 10h-6z" fill="#f26a60"/><path d="M31 23l-4 19M24 29h9" stroke="#52c0e4" stroke-width="2"/><path d="M38 23l-4 19M24 36h16M33 29h8" stroke="#f26a60" stroke-width="2"/></svg>
<svg viewBox="0 0 64 74"><use href="#t" fill="#fff"/><path d="M23 44V18l23 14-19 14" fill="none" stroke="#ee7a2c" stroke-width="7" stroke-linejoin="round"/><path d="M23 18v20" stroke="#e2501e" stroke-width="7"/></svg>
<svg viewBox="0 0 64 74"><use href="#t" fill="#fff"/><path d="M23 14l20 14q4 4 0 8L23 50V38l9-6-9-6z" fill="#47dc60"/><path d="M23 39l12-5 4 5-16 11z" fill="#3058dc"/></svg>
<svg viewBox="0 0 64 74"><use href="#t" fill="url(#gPlay)"/><path d="M24 20l22 12-22 12z" fill="#8cd4fb"/></svg>
<svg viewBox="0 0 64 74"><use href="#t" fill="#3f8df6"/><path d="M18 44a8 8 0 0 1-1-16c3-12 25-13 29 0a8 8 0 0 1 1 16z" fill="#fff"/><path d="M18 22l10 6h8l10-6-8 9v5l4 7-8-4-10 5 3-8v-5z" fill="#e2473c"/><circle cx="32" cy="25" r="3" fill="#e2473c"/></svg>
<svg viewBox="0 0 64 74"><use href="#t" fill="#3b87f8"/><circle cx="32" cy="32" r="19" fill="#f8f8f8"/><path d="M31 22l-7 6 6 6-7 7M41 23l-7 6 6 6-7 7" fill="none" stroke="#3b78e8" stroke-width="4"/></svg>
<div class="w-[2px] h-[58px] shrink-0 mt-[4px] ml-[12px] mr-[15px] bg-[#8d7a48]"></div>
<svg viewBox="0 0 64 74"><use href="#t" fill="#f2ecf8"/><rect x="12" y="16" width="40" height="24" rx="4" fill="#e068a4"/><path d="M28 40h8l2 7H26z" fill="#9aa0ae"/><path d="M32 17l8 0 8 20" fill="none" stroke="#444" stroke-width="1.500"/></svg>
<svg viewBox="0 0 64 74"><use href="#t" fill="#cf2a24"/><g fill="#cf2a24" stroke="#fff" stroke-width="1.800" stroke-linejoin="round"><path d="M27 17h15l3 22-14 2z"/><path d="M20 20l14-3 6 21-13 4z"/><path d="M15 26l12-7 11 19-12 7z"/><path d="M12 34l9-9 13 15-9 8z"/></g><path d="M44 29c2 6 8 8 8 13 0 3-4 4-7 2l1 5h-4l1-5c-3 2-7 1-7-2 0-5 6-7 8-13z" fill="#fff"/><circle cx="31" cy="69" r="3" fill="#d8c48c"/></svg>
<svg viewBox="0 0 64 74"><use href="#t" fill="#f3f3f0"/><rect x="11" y="11" width="42" height="42" rx="8" fill="#9bbbe8"/><path d="M11 34h42v8H11z" fill="#22407c"/><path d="M11 42h30l-4 11H19a8 8 0 0 1-8-8z" fill="#a7b2bc"/><path d="M34 40h18l5 18q-14 3-28 0z" fill="#b9b9b5"/><path d="M37 48h12v7H36z" fill="#e8e8e4"/><rect x="33" y="32" width="20" height="10" rx="3" fill="#15181c"/></svg>
<div class="w-[2px] h-[58px] shrink-0 mt-[4px] ml-[13px] mr-[13px] bg-[#8d7a48]"></div>
<svg viewBox="0 0 64 74"><path d="M16 3h22l8 10H14z" fill="#eee"/><rect x="6" y="12" width="52" height="44" fill="#0a0a0a"/><rect x="7" y="19" width="50" height="31" fill="#2a2f36"/><path d="M6 18h52M8 50h48" stroke="#b08a34" stroke-width="1.500"/><path d="M12 25h10M12 29h14M12 33h9" stroke="#59616c"/></svg>
<svg viewBox="0 0 64 74"><path d="M11 9h42l-6 46q-15 6-30 0z" fill="url(#gBin)"/><ellipse cx="32" cy="10" rx="21" ry="4.500" fill="#5b564a" stroke="#98958a" stroke-width="2"/></svg>
</nav>
</body>
</html>
